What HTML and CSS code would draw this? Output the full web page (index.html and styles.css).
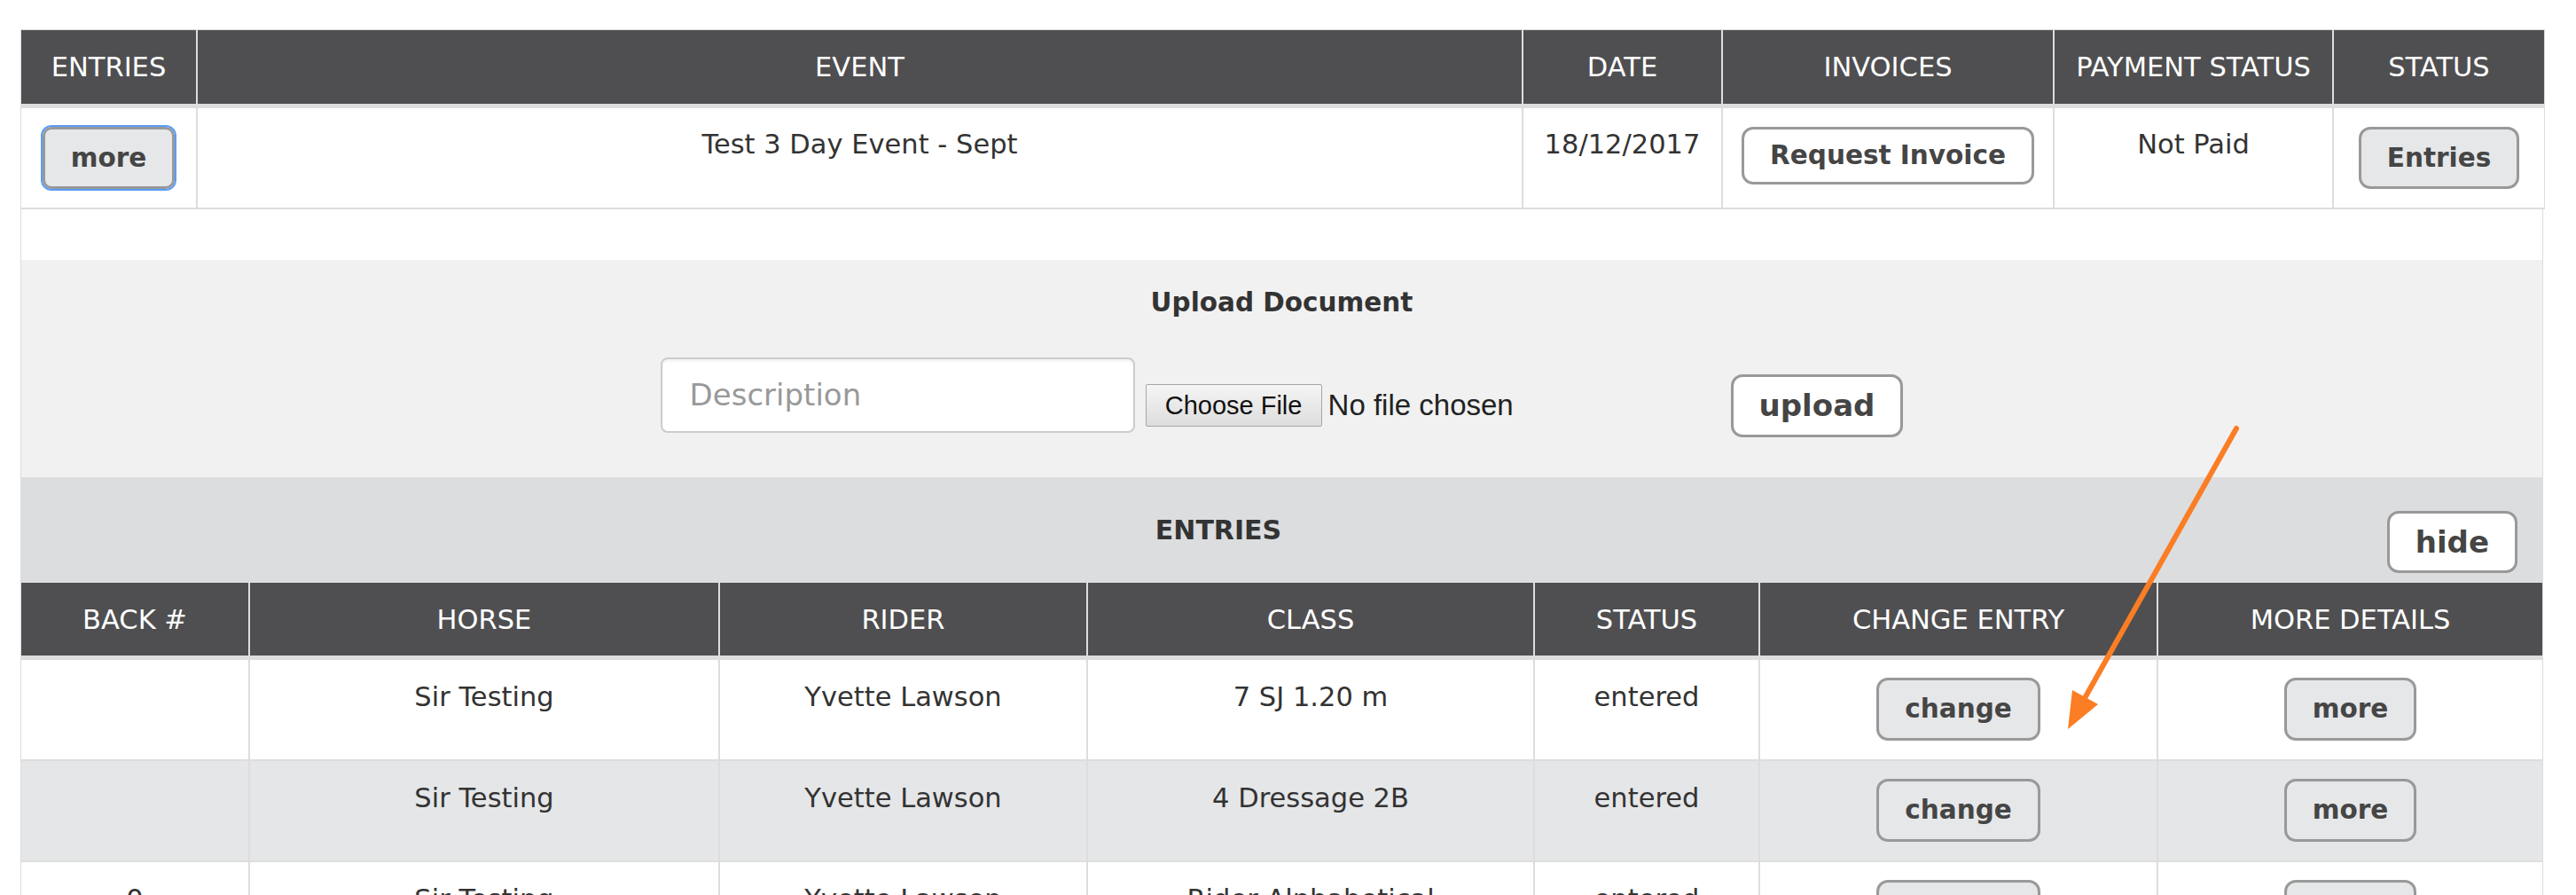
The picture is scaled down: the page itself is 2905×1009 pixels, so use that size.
FILE: index.html
```html
<!DOCTYPE html>
<html lang="en">
<head>
<meta charset="utf-8">
<title>Entries</title>
<link rel="stylesheet" href="styles.css">
</head>
<body>
<div class="page">
  <table class="grid events">
    <colgroup>
      <col class="c-e1"><col class="c-e2"><col class="c-e3"><col class="c-e4"><col class="c-e5"><col class="c-e6">
    </colgroup>
    <thead>
      <tr><th>ENTRIES</th><th>EVENT</th><th>DATE</th><th>INVOICES</th><th>PAYMENT STATUS</th><th class="last">STATUS</th></tr>
    </thead>
    <tbody>
      <tr>
        <td><button class="btn btn-gray btn-focus">more</button></td>
        <td>Test 3 Day Event - Sept</td>
        <td>18/12/2017</td>
        <td><button class="btn btn-white btn-invoice">Request Invoice</button></td>
        <td>Not Paid</td>
        <td class="last"><button class="btn btn-gray">Entries</button></td>
      </tr>
    </tbody>
  </table>

  <div class="details">
    <div class="gap"></div>

    <section class="upload">
      <h3 class="upload-title">Upload Document</h3>
      <div class="upload-row">
        <div class="desc-input">Description</div>
        <div class="file-input">
          <span class="file-btn">Choose File</span>
          <span class="file-label">No file chosen</span>
        </div>
        <button class="btn btn-white btn-big btn-upload">upload</button>
      </div>
    </section>

    <section class="entries-bar">
      <h3 class="entries-title">ENTRIES</h3>
      <button class="btn btn-white btn-big btn-hide">hide</button>
    </section>

    <table class="grid entries">
      <colgroup>
        <col class="c-n1"><col class="c-n2"><col class="c-n3"><col class="c-n4"><col class="c-n5"><col class="c-n6"><col class="c-n7">
      </colgroup>
      <thead>
        <tr><th>BACK #</th><th>HORSE</th><th>RIDER</th><th>CLASS</th><th>STATUS</th><th>CHANGE ENTRY</th><th class="last">MORE DETAILS</th></tr>
      </thead>
      <tbody>
        <tr>
          <td></td><td>Sir Testing</td><td>Yvette Lawson</td><td>7 SJ 1.20 m</td><td>entered</td>
          <td><button class="btn btn-gray btn-row">change</button></td>
          <td class="last"><button class="btn btn-gray btn-row">more</button></td>
        </tr>
        <tr class="alt">
          <td></td><td>Sir Testing</td><td>Yvette Lawson</td><td>4 Dressage 2B</td><td>entered</td>
          <td><button class="btn btn-gray btn-row">change</button></td>
          <td class="last"><button class="btn btn-gray btn-row">more</button></td>
        </tr>
        <tr>
          <td>0</td><td>Sir Testing</td><td>Yvette Lawson</td><td>Rider Alphabetical</td><td>entered</td>
          <td><button class="btn btn-gray btn-row">change</button></td>
          <td class="last"><button class="btn btn-gray btn-row">more</button></td>
        </tr>
      </tbody>
    </table>
  </div>
</div>

<svg class="arrow" width="2905" height="1009" viewBox="0 0 2905 1009" xmlns="http://www.w3.org/2000/svg">
  <line x1="2522" y1="483" x2="2351" y2="787" stroke="#fb7d24" stroke-width="6" stroke-linecap="round"/>
  <polygon points="2332,822 2337,778 2366,794" fill="#fb7d24"/>
</svg>
</body>
</html>
```

FILE: styles.css
```css
html, body {
  margin: 0;
  padding: 0;
  background: #ffffff;
  overflow: hidden;
}

body {
  font-family: "DejaVu Sans", Verdana, sans-serif;
  color: #333333;
  position: relative;
  width: 2905px;
  height: 1009px;
}

.page {
  margin: 33px 0 0 23px;
  width: 2845px;
}

/* ---------- tables ---------- */
.grid {
  width: 100%;
  table-layout: fixed;
  border-collapse: separate;
  border-spacing: 0;
}

.grid th,
.grid td {
  box-sizing: border-box;
  text-align: center;
  border-right: 2px solid #dddddd;
  padding: 0;
}

.grid th.last,
.grid td.last {
  border-right: none;
}

.grid th {
  background: #4f4f51;
  color: #ffffff;
  font-weight: normal;
  font-size: 30.5px;
  vertical-align: middle;
  border-bottom: 5px solid #dddddd;
}

.grid td {
  font-size: 30.5px;
  line-height: 43px;
  vertical-align: top;
  border-bottom: 2px solid #dddddd;
}

/* top events table */
.events {
  border-top: 1px solid #dddddd;
  border-left: 1px solid #dddddd;
  border-right: 1px solid #dddddd;
}

.events th { height: 88px; }
.events td { height: 114px; padding-top: 19px; }
.events .btn { margin-top: 2px; }

.c-e1 { width: 199px; }
.c-e2 { width: 1495px; }
.c-e3 { width: 225px; }
.c-e4 { width: 374px; }
.c-e5 { width: 315px; }
.c-e6 { width: 237px; }

/* entries table */
.entries th { height: 87px; }
.entries td { height: 114px; padding-top: 20px; }
.entries tr.alt td { background: #e5e6e8; }
.entries .btn { margin-top: 0; }

.c-n1 { width: 258px; }
.c-n2 { width: 530px; }
.c-n3 { width: 415px; }
.c-n4 { width: 504px; }
.c-n5 { width: 254px; }
.c-n6 { width: 449px; }
.c-n7 { width: 433px; }

/* ---------- buttons ---------- */
.btn {
  display: inline-block;
  vertical-align: top;
  box-sizing: border-box;
  font-family: "DejaVu Sans", Verdana, sans-serif;
  font-weight: bold;
  font-size: 29.5px;
  color: #454545;
  border: 3px solid #999999;
  border-radius: 13px;
  padding: 0 29px;
  height: 70px;
  line-height: 62px;
  margin: 0;
}

.btn-gray { background: #e6e7e9; }
.btn-white { background: #ffffff; }

.btn-focus {
  outline: 2px solid #5b9cf6;
  outline-offset: 0;
  border-radius: 10px;
}

.btn-invoice {
  height: 65px;
  line-height: 57px;
}

.btn-row {
  height: 71px;
  line-height: 63px;
}

.btn-big {
  font-size: 34px;
  height: 71px;
  line-height: 63px;
}

.btn-hide {
  height: 70px;
  line-height: 62px;
  padding: 0 29px;
}

/* ---------- details container ---------- */
.details {
  border-left: 1px solid #dddddd;
  border-right: 1px solid #dddddd;
}

.gap { height: 57px; }

/* upload panel */
.upload {
  background: #f1f1f1;
  padding: 33px 0 45px;
}

.upload-title {
  margin: 0;
  text-align: center;
  font-size: 29.5px;
  line-height: 30px;
  font-weight: bold;
  color: #333333;
}

.upload-row {
  margin-top: 47px;
  display: flex;
  justify-content: center;
  align-items: flex-start;
  height: 90px;
}

.desc-input {
  box-sizing: border-box;
  width: 535px;
  height: 85px;
  background: #ffffff;
  border: 2px solid #cccccc;
  border-radius: 8px;
  padding-left: 31px;
  font-size: 34px;
  line-height: 81px;
  color: #999999;
  margin-right: 12px;
  box-shadow: inset 0 2px 3px rgba(0, 0, 0, 0.06);
}

.file-input {
  width: 660px;
  margin-top: 30px;
  display: flex;
  align-items: center;
  height: 48px;
  font-family: "Liberation Sans", Arial, sans-serif;
}

.file-btn {
  box-sizing: border-box;
  height: 48px;
  width: 199px;
  line-height: 46px;
  text-align: center;
  font-size: 29px;
  color: #111111;
  background: linear-gradient(#f5f5f5, #dddddd);
  border: 1px solid #a6a6a6;
  border-radius: 2px;
}

.file-label {
  margin-left: 7px;
  font-size: 33px;
  color: #222222;
}

.btn-upload { margin-top: 19px; }

/* entries bar */
.entries-bar {
  background: #dcdddf;
  height: 119px;
  display: grid;
  grid-template-columns: 1fr;
}

.entries-title {
  grid-area: 1 / 1;
  margin: 45px 0 0;
  padding-right: 143px;
  text-align: center;
  font-size: 30px;
  line-height: 30px;
  font-weight: bold;
  color: #333333;
  align-self: start;
}

.btn-hide {
  grid-area: 1 / 1;
  justify-self: end;
  align-self: start;
  margin-top: 38px;
  margin-right: 28px;
}

/* annotation arrow */
.arrow {
  position: absolute;
  top: 0;
  left: 0;
  pointer-events: none;
}
```
